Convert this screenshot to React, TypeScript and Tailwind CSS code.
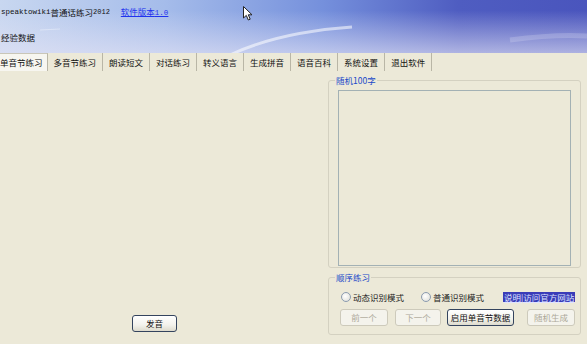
import React from 'react';

const tabs = ['单音节练习', '多音节练习', '朗读短文', '对话练习', '转义语言', '生成拼音', '语音百科', '系统设置', '退出软件'];

const cjk = { fontFamily: '"Noto Sans CJK SC", "Noto Sans", sans-serif' };
const mono = { fontFamily: '"Liberation Mono", monospace' };

interface BtnProps {
  label: string;
  width: string;
  disabled?: boolean;
}

const XpButton: React.FC<BtnProps> = ({ label, width, disabled }) => (
  <button
    disabled={disabled}
    className={
      disabled
        ? `${width} h-[17px] rounded-[3px] border border-[#cdcabb] bg-[#f4f3ec] text-[#aca899] text-[8.5px] leading-none whitespace-nowrap flex items-center justify-center`
        : `${width} h-[17px] rounded-[3px] border border-[#34445e] bg-[linear-gradient(to_bottom,#ffffff,#f3f2ec_60%,#dedbcd)] text-[#111] text-[8.5px] leading-none whitespace-nowrap flex items-center justify-center`
    }
  >
    {label}
  </button>
);

const Radio: React.FC<{ label: string }> = ({ label }) => (
  <div className="flex items-center gap-[2px] flex-none">
    <span className="w-[10px] h-[10px] rounded-full border border-[#8b9bb0] bg-[radial-gradient(circle_at_40%_40%,#ffffff,#dcdcd4)]" />
    <span className="text-[8.5px] leading-[10px] text-[#222] whitespace-nowrap">{label}</span>
  </div>
);

const App: React.FC = () => {
  return (
    <div className="w-[587px] h-[344px] bg-[#ece9d8] overflow-hidden relative" style={cjk}>
      {/* sky header */}
      <div className="relative h-[53px] bg-[linear-gradient(to_bottom,rgba(255,255,255,0)_20%,rgba(226,226,244,0.65)_100%),linear-gradient(to_right,#c8d7f0_0%,#a5bcea_28%,#7590dc_55%,#4f5dc1_78%,#4a55bd_100%)]">
        <svg className="absolute left-0 top-0" width="587" height="53" viewBox="0 0 587 53">
          <path d="M232 54 Q280 32 352 27" stroke="white" strokeOpacity="0.55" strokeWidth="3" fill="none" />
          <path d="M40 30 L60 29" stroke="white" strokeOpacity="0.35" strokeWidth="1" />
          <path d="M510 40 Q555 34 587 36" stroke="white" strokeOpacity="0.18" strokeWidth="5" fill="none" />
        </svg>
        <div className="relative flex items-center pt-[7px] pl-[1px] h-[17px] whitespace-nowrap">
          <span className="text-[7.5px] leading-[10px] text-[#111]" style={mono}>
            speaktowiki
          </span>
          <span className="text-[8.5px] leading-[10px] text-[#111]">普通话练习</span>
          <span className="text-[7px] leading-[10px] text-[#111]" style={mono}>
            2012
          </span>
          <a className="ml-[11px] text-[8.5px] leading-[10px] text-[#1f34ee] underline">
            软件版本<span style={mono} className="text-[7.5px]">1.0</span>
          </a>
        </div>
        <div className="relative pt-[15px] pl-[1px] text-[8.5px] leading-[10px] text-[#111]">经验数据</div>
        <svg className="absolute left-[243px] top-[6px]" width="11" height="16" viewBox="0 0 11 16">
          <path d="M0.5 0.5 L0.5 12 L3.3 9.4 L5.3 14 L7.2 13.2 L5.3 8.8 L9 8.8 Z" fill="white" stroke="#222" strokeWidth="1" />
        </svg>
      </div>

      {/* tab strip */}
      <div className="flex h-[18px] -ml-[4px] items-stretch whitespace-nowrap">
        {tabs.map((t, i) => (
          <div
            key={t}
            className={
              i === 0
                ? 'flex items-center px-[4px] bg-[#f7f6f0] border-r border-[#b9b6a6] border-t border-t-[#c9c6b8] text-[8.5px] text-[#111]'
                : 'flex items-center px-[6px] border-r border-[#b9b6a6] text-[8.5px] text-[#111]'
            }
          >
            {t}
          </div>
        ))}
      </div>

      {/* body */}
      <div className="flex h-[273px]">
        <div className="w-[328px] flex flex-col justify-end pb-[12px] pl-[132px]">
          <XpButton label="发音" width="w-[45px]" />
        </div>

        <div className="w-[253px] flex flex-col">
          <fieldset className="mt-[4px] border border-[#d4d1c1] rounded-[3px] px-[9px] pb-[1px]">
            <legend className="-ml-[3px] px-[1px] text-[8.5px] leading-[10px] text-[#2149c9]">随机100字</legend>
            <div className="mt-[5px] h-[176px] border border-[#a3b1b4] bg-[#ece9d8]" />
          </fieldset>

          <fieldset className="mt-[4px] border border-[#d4d1c1] rounded-[3px] pl-[12px] pr-[5px] pb-[8px]">
            <legend className="-ml-[6px] px-[1px] text-[8.5px] leading-[10px] text-[#2149c9]">顺序练习</legend>
            <div className="mt-[10px] flex items-center h-[10px] whitespace-nowrap">
              <Radio label="动态识别模式" />
              <div className="ml-[17px] flex-none">
                <Radio label="普通识别模式" />
              </div>
              <a className="ml-[19px] px-[1px] bg-[#3a3cb8] text-[#dfe3ff] underline text-[8.5px] leading-[10px] flex-none">说明|访问官方网站</a>
            </div>
            <div className="mt-[7px] flex items-center">
              <div className="-ml-[1px]">
                <XpButton label="前一个" width="w-[48px]" disabled />
              </div>
              <div className="ml-[7px]">
                <XpButton label="下一个" width="w-[46px]" disabled />
              </div>
              <div className="ml-[6px]">
                <XpButton label="启用单音节数据" width="w-[67px]" />
              </div>
              <div className="ml-[13px]">
                <XpButton label="随机生成" width="w-[48px]" disabled />
              </div>
            </div>
          </fieldset>
        </div>
      </div>
    </div>
  );
};

export default App;
